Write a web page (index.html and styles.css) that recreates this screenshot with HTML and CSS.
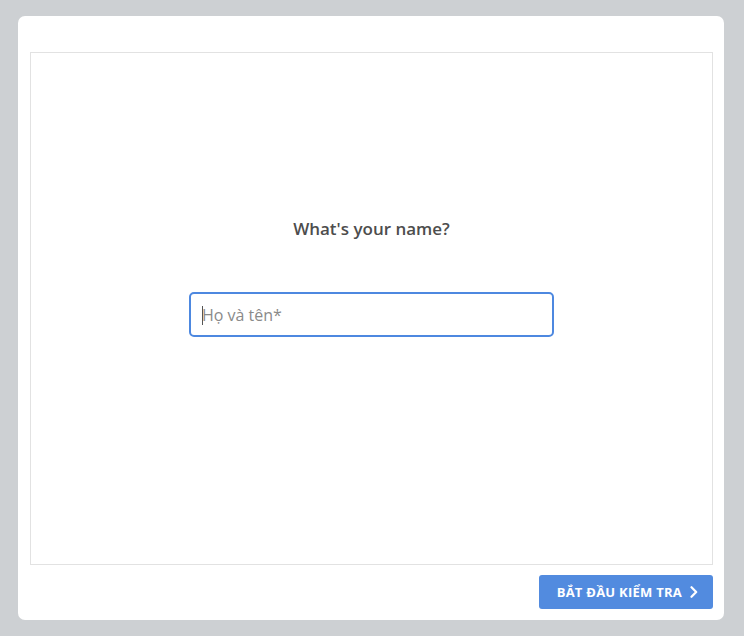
FILE: index.html
```html
<!DOCTYPE html>
<html lang="vi">
<head>
<meta charset="utf-8">
<title>Quiz</title>
<link rel="stylesheet" href="styles.css">
</head>
<body>
<div class="card">
  <div class="stage">
    <h2 class="question">What's your name?</h2>
    <div class="field">
      <span class="caret"></span>
      <input class="name-input" type="text" placeholder="Họ và tên*">
    </div>
  </div>
  <div class="actions">
    <button class="start-btn" type="button">
      <span>BẮT ĐẦU KIỂM TRA</span>
      <svg class="chev" width="8" height="12" viewBox="0 0 8 12"><path d="M1.5 1.2 L6.2 6 L1.5 10.8" fill="none" stroke="#fff" stroke-width="2.2" stroke-linecap="round" stroke-linejoin="round"/></svg>
    </button>
  </div>
</div>
</body>
</html>
```
FILE: styles.css
```css
* { box-sizing: border-box; }
html, body {
  margin: 0;
  background: #cdd0d3;
  height: 100%;
}
body {
  padding: 16px 20px 16px 18px;
  font-family: "Open Sans", "Noto Sans", sans-serif;
}
.card {
  width: 706px;
  height: 604px;
  background: #fff;
  border-radius: 7px;
  padding: 36px 11px 0 12px;
  display: flex;
  flex-direction: column;
}
.stage {
  height: 513px;
  border: 1px solid #e2e2e2;
  display: flex;
  flex-direction: column;
  align-items: center;
  padding-top: 165px;
}
.question {
  margin: 0;
  font-size: 17px;
  line-height: 22px;
  font-weight: 600;
  color: #4d4d4d;
}
.field {
  position: relative;
  margin-top: 52px;
  width: 365px;
  height: 45px;
}
.name-input {
  width: 100%;
  height: 100%;
  border: 2px solid #4d88e0;
  border-radius: 5px;
  padding: 0 0 0 11px;
  font-family: "Open Sans", "Noto Sans", sans-serif;
  font-size: 16px;
  color: #333;
  outline: none;
  background: #fff;
}
.name-input::placeholder {
  color: #8a8a8a;
}
.caret {
  position: absolute;
  left: 13px;
  top: 14px;
  width: 1px;
  height: 19px;
  background: #555;
  z-index: 1;
}
.actions {
  display: flex;
  justify-content: flex-end;
  padding-top: 10px;
}
.start-btn {
  width: 174px;
  height: 34px;
  background: #528bdf;
  border: none;
  border-radius: 3px;
  color: #fff;
  font-family: "Open Sans", "Noto Sans", sans-serif;
  font-weight: 700;
  font-size: 13px;
  letter-spacing: 0.25px;
  display: flex;
  align-items: center;
  justify-content: flex-end;
  gap: 8px;
  padding: 0 15px 0 0;
  cursor: pointer;
}
.chev { display: block; }
```
